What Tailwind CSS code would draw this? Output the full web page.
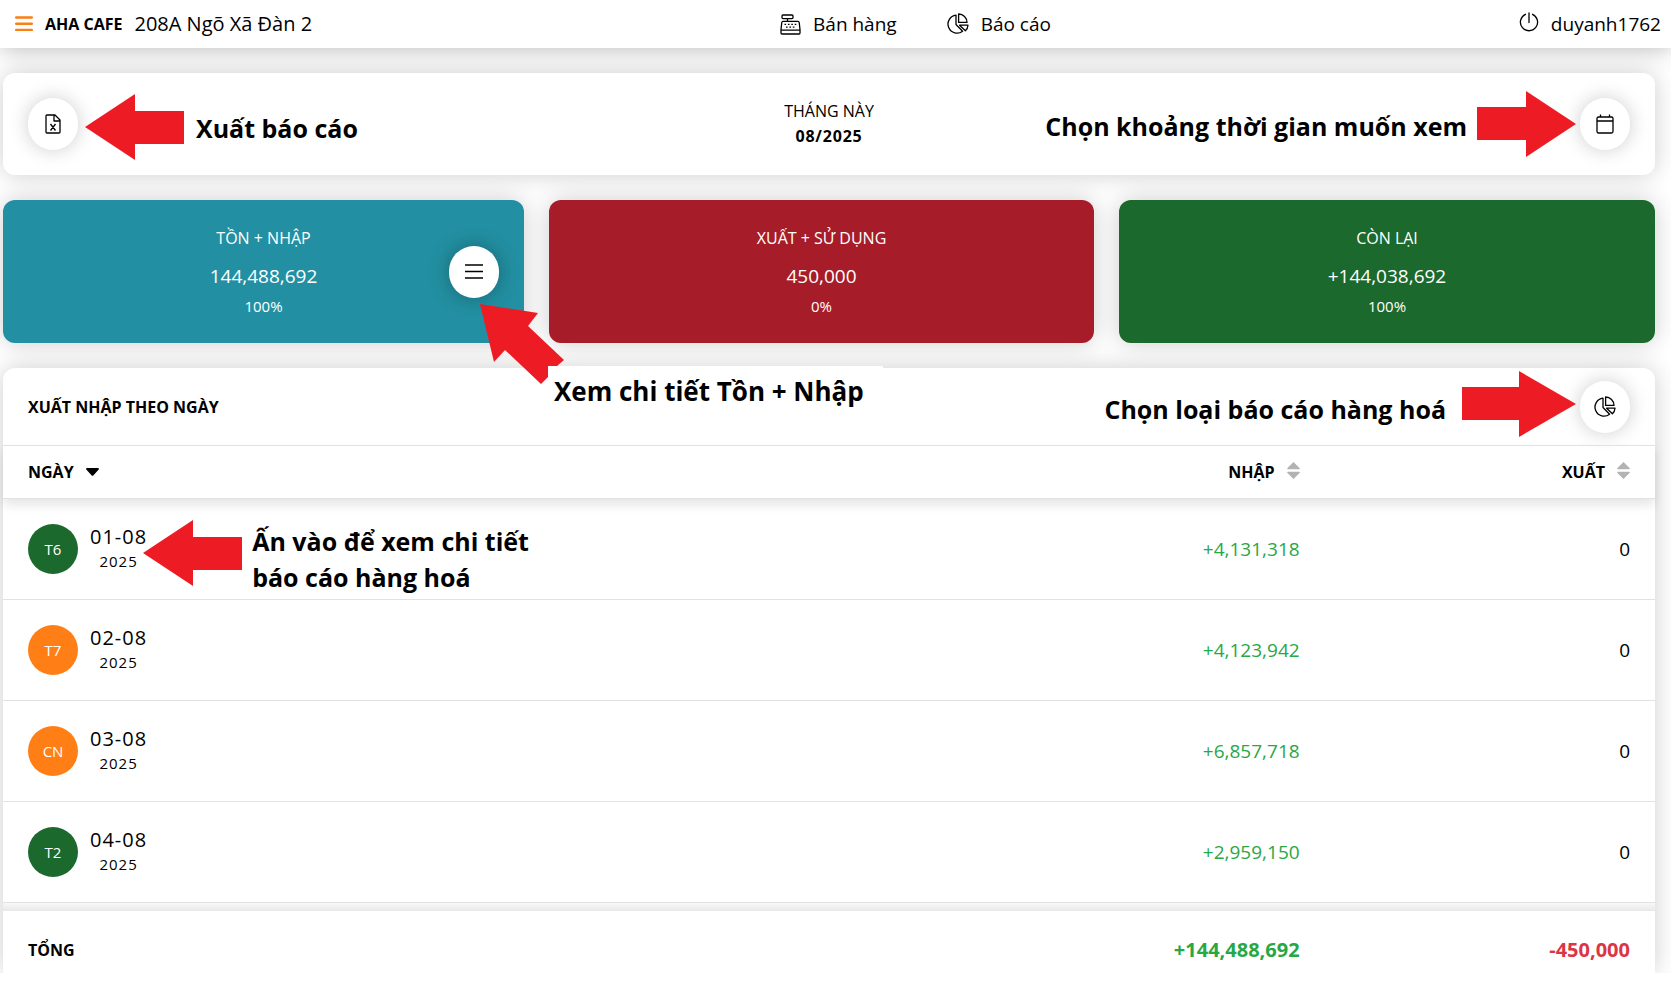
<!DOCTYPE html>
<html lang="vi">
<head>
<meta charset="utf-8">
<meta name="viewport" content="width=device-width, initial-scale=1">
<title>AHA CAFE - Báo cáo hàng hoá</title>
<script src="https://cdn.jsdelivr.net/npm/@tailwindcss/browser@4"></script>
</head>
<body class="min-h-screen overflow-x-hidden bg-white pb-[10px] font-['Open_Sans','Noto_Sans',sans-serif] text-[19px] leading-6 text-black">
<svg class="hidden">
  <symbol id="pie" viewBox="0 0 22 22" fill="none" stroke="currentColor" stroke-width="1.3" stroke-linejoin="round">
    <path d="M9 2.2A9 9 0 1 0 15.6 18.2L9 11.5Z"/>
    <path d="M11.6 1v8.4H20A8.4 8.4 0 0 0 11.6 1Z"/>
    <path d="M12.6 12.2H21a8.4 8.4 0 0 1-2.6 5.6Z"/>
  </symbol>
  <symbol id="arrow" viewBox="0 0 99 66"><path fill="#ed1c24" d="M0 33 50 0V17H99V50H50V66Z"/></symbol>
  <symbol id="sort" viewBox="0 0 13 17"><path fill="#b3b3b3" d="M6.500 0 12.800 6.200Q13 7.200 12 7.200H1Q0 7.200 .2 6.200ZM6.500 17 .2 10.800Q0 9.800 1 9.800H12Q13 9.800 12.800 10.800Z"/></symbol>
</svg>

<header class="relative z-10 flex h-12 items-center justify-between bg-white pr-[10px] pl-[15px] shadow-[0_0_25px_rgba(0,0,0,0.3)]">
  <div class="flex items-center">
    <button aria-label="Menu" class="text-[#fd7e14]"><svg class="h-4 w-[18px]" viewBox="0 0 18 16" stroke="currentColor" stroke-width="2.400" stroke-linecap="round"><path d="M1.200 1.500H16.800M1.200 7.700H16.800M1.200 13.900H16.800"/></svg></button>
    <strong class="ml-3 text-base">AHA CAFE</strong>
    <span class="ml-3 text-xl">208A Ngõ Xã Đàn 2</span>
  </div>
  <nav class="flex items-center gap-[50px]">
    <a href="#" class="flex items-center gap-3">
      <svg class="h-[21px] w-[21px]" viewBox="0 0 21 21" fill="none" stroke="currentColor" stroke-width="1.300" stroke-linejoin="round"><rect x="2" y="1" width="11" height="3.600" rx="1"/><path d="M7.500 4.600V7.300M3 7.300H18Q19 7.300 19.200 8.500L20 15.500V19Q20 20 19 20H2Q1 20 1 19V15.500L1.800 8.500Q2 7.300 3 7.300ZM1.200 16.200H19.800"/><path stroke-dasharray="1.600 1.800" d="M4.500 10.400H17M6 13.200H15.500"/></svg>
      Bán hàng</a>
    <a href="#" class="flex items-center gap-3"><svg class="h-[22px] w-[22px]"><use href="#pie"/></svg>Báo cáo</a>
  </nav>
  <a href="#" class="flex items-center gap-3">
    <svg class="mb-1 h-5 w-5" viewBox="0 0 20 20" fill="none" stroke="currentColor" stroke-width="1.300" stroke-linecap="round"><path d="M6.500 2.300A8.600 8.600 0 1 0 13.500 2.300M10 .8V10.500"/></svg>
    duyanh1762</a>
</header>

<main class="flex flex-col gap-[25px] overflow-hidden pt-[25px] pr-4 pl-[3px]">
  <section class="grid h-[102px] grid-cols-[1fr_auto_1fr] items-center rounded-xl bg-white px-[25px] shadow-[0_0_25px_rgba(0,0,0,0.2)]">
    <div class="flex items-center">
      <button aria-label="Xuất báo cáo" class="grid h-[52px] w-[50px] place-items-center rounded-full shadow-[0_0_20px_rgba(0,0,0,0.2)]">
        <svg class="h-5 w-4" viewBox="0 0 16 20" fill="none" stroke="currentColor" stroke-width="1.300" stroke-linejoin="round"><path d="M1 2Q1 1 2 1H10L15 6V18Q15 19 14 19H2Q1 19 1 18ZM9 1V7H15M5.500 10 10.500 16.500M10.500 10 5.500 16.500"/></svg>
      </button>
      <svg class="mt-[6px] ml-[7px] h-[66px] w-[99px]"><use href="#arrow"/></svg>
      <span class="mt-2 ml-3 text-[25px] leading-9 font-bold">Xuất báo cáo</span>
    </div>
    <div class="text-center text-base leading-[25px]">
      <div>THÁNG NÀY</div>
      <strong class="tracking-wider">08/2025</strong>
    </div>
    <div class="flex items-center justify-end">
      <span class="mt-1 mr-[10px] text-[25px] leading-9 font-bold whitespace-nowrap">Chọn khoảng thời gian muốn xem</span>
      <svg class="mr-1 h-[66px] w-[99px] rotate-180"><use href="#arrow"/></svg>
      <button aria-label="Chọn khoảng thời gian" class="grid h-[52px] w-[50px] place-items-center rounded-full shadow-[0_0_20px_rgba(0,0,0,0.2)]">
        <svg class="h-5 w-[18px]" viewBox="0 0 18 20" fill="none" stroke="currentColor" stroke-width="1.300"><rect x="1" y="3" width="16" height="16" rx="1.500"/><path d="M1 7H17M4.500 .5V3M13.500 .5V3"/></svg>
      </button>
    </div>
  </section>

  <section class="relative grid grid-cols-[521fr_545fr_536fr] gap-[25px] text-center text-white">
    <div class="relative h-[143px] rounded-xl bg-[#2290a2] pt-[26px] shadow-[0_0_25px_rgba(0,0,0,0.2)]">
      <div class="text-base">TỒN + NHẬP</div>
      <div class="mt-[14px]">144,488,692</div>
      <div class="mt-[6px] text-[15px]">100%</div>
      <button aria-label="Chi tiết Tồn + Nhập" class="absolute top-[46px] right-[25px] grid h-[52px] w-[50px] place-items-center rounded-full bg-white text-black shadow-[0_0_20px_rgba(0,0,0,0.3)]">
        <svg class="h-4 w-[18px]" viewBox="0 0 18 16" stroke="currentColor" stroke-width="1.400"><path d="M0 1H18M0 7.500H18M0 14H18"/></svg>
      </button>
    </div>
    <div class="h-[143px] rounded-xl bg-[#a61d29] pt-[26px] shadow-[0_0_25px_rgba(0,0,0,0.2)]">
      <div class="text-base">XUẤT + SỬ DỤNG</div>
      <div class="mt-[14px]">450,000</div>
      <div class="mt-[6px] text-[15px]">0%</div>
    </div>
    <div class="h-[143px] rounded-xl bg-[#1b692c] pt-[26px] shadow-[0_0_25px_rgba(0,0,0,0.2)]">
      <div class="text-base">CÒN LẠI</div>
      <div class="mt-[14px]">+144,038,692</div>
      <div class="mt-[6px] text-[15px]">100%</div>
    </div>
    <!-- Callout for the detail button -->
    <svg class="absolute top-[104px] left-[477px] z-20 h-20 w-[84px]" viewBox="0 0 84 80"><path fill="#ed1c24" d="M0 0 58 9 48 22 84 56 77 62H68V73L61 80 25 46 14 58Z"/></svg>
    <div class="absolute top-[166px] left-[545px] z-10 w-[335px] bg-white pl-[6px] text-left text-[26px] leading-[50px] font-bold whitespace-nowrap text-black">Xem chi tiết Tồn + Nhập</div>
  </section>

  <section class="rounded-t-xl bg-white shadow-[0_0_25px_rgba(0,0,0,0.2)]">
    <div class="flex h-[77px] items-center px-[25px]">
      <h1 class="text-base font-bold">XUẤT NHẬP THEO NGÀY</h1>
      <span class="mt-1 mr-4 ml-auto text-[25px] leading-9 font-bold">Chọn loại báo cáo hàng hoá</span>
      <svg class="mr-1 mb-[6px] h-[66px] w-[114px] rotate-180" viewBox="0 0 114 66"><path fill="#ed1c24" d="M0 33 57 0V17H114V50H57V66Z"/></svg>
      <button aria-label="Chọn loại báo cáo" class="grid h-[52px] w-[50px] place-items-center rounded-full shadow-[0_0_20px_rgba(0,0,0,0.2)]"><svg class="h-[22px] w-[22px]"><use href="#pie"/></svg></button>
    </div>
    <table class="w-full table-fixed border-separate border-spacing-0">
      <colgroup><col><col class="w-[20%]"><col class="w-[20%]"></colgroup>
      <thead class="relative shadow-[0_6px_10px_rgba(0,0,0,0.1)]">
        <tr class="h-[54px] text-base">
          <th class="border-y border-[#e2e2e2] px-[25px] text-left"><button class="flex items-center gap-3 font-bold">NGÀY <svg class="h-2 w-[13px]" viewBox="0 0 13 8"><path d="M1 0H12Q13.500 .5 12.500 1.800L7.500 7.300Q6.500 8.300 5.500 7.300L.5 1.800Q-.5 .5 1 0Z"/></svg></button></th>
          <th class="border-y border-[#e2e2e2] px-[25px]"><button class="ml-auto flex items-center gap-3 font-bold">NHẬP <svg class="mb-1 h-[17px] w-[13px]"><use href="#sort"/></svg></button></th>
          <th class="border-y border-[#e2e2e2] px-[25px]"><button class="ml-auto flex items-center gap-3 font-bold">XUẤT <svg class="mb-1 h-[17px] w-[13px]"><use href="#sort"/></svg></button></th>
        </tr>
      </thead>
      <tbody>
        <tr class="h-[101px]">
          <td class="border-b border-[#e2e2e2] px-[25px]"><div class="flex items-center">
            <span class="grid h-[50px] w-[50px] place-items-center rounded-full bg-[#1b692c] text-[15px] text-white">T6</span>
            <div class="ml-3 text-center text-xl leading-6 tracking-wider">01-08<div class="text-[15px]">2025</div></div>
            <svg class="-ml-1 mt-2 h-[66px] w-[99px]"><use href="#arrow"/></svg>
            <span class="mt-5 ml-[10px] text-[25px] leading-9 font-bold whitespace-nowrap">Ấn vào để xem chi tiết<br>báo cáo hàng hoá</span>
          </div></td>
          <td class="border-b border-[#e2e2e2] px-[25px] text-right text-[#28a745]">+4,131,318</td>
          <td class="border-b border-[#e2e2e2] px-[25px] text-right">0</td>
        </tr>
        <tr class="h-[101px]">
          <td class="border-b border-[#e2e2e2] px-[25px]"><div class="flex items-center">
            <span class="grid h-[50px] w-[50px] place-items-center rounded-full bg-[#ff7f16] text-[15px] text-white">T7</span>
            <div class="ml-3 text-center text-xl leading-6 tracking-wider">02-08<div class="text-[15px]">2025</div></div>
          </div></td>
          <td class="border-b border-[#e2e2e2] px-[25px] text-right text-[#28a745]">+4,123,942</td>
          <td class="border-b border-[#e2e2e2] px-[25px] text-right">0</td>
        </tr>
        <tr class="h-[101px]">
          <td class="border-b border-[#e2e2e2] px-[25px]"><div class="flex items-center">
            <span class="grid h-[50px] w-[50px] place-items-center rounded-full bg-[#ff7f16] text-[15px] text-white">CN</span>
            <div class="ml-3 text-center text-xl leading-6 tracking-wider">03-08<div class="text-[15px]">2025</div></div>
          </div></td>
          <td class="border-b border-[#e2e2e2] px-[25px] text-right text-[#28a745]">+6,857,718</td>
          <td class="border-b border-[#e2e2e2] px-[25px] text-right">0</td>
        </tr>
        <tr class="h-[101px]">
          <td class="border-b border-[#e2e2e2] px-[25px]"><div class="flex items-center">
            <span class="grid h-[50px] w-[50px] place-items-center rounded-full bg-[#1b692c] text-[15px] text-white">T2</span>
            <div class="ml-3 text-center text-xl leading-6 tracking-wider">04-08<div class="text-[15px]">2025</div></div>
          </div></td>
          <td class="border-b border-[#e2e2e2] px-[25px] text-right text-[#28a745]">+2,959,150</td>
          <td class="border-b border-[#e2e2e2] px-[25px] text-right">0</td>
        </tr>
      </tbody>
      <tfoot>
        <tr class="h-2"><td colspan="3" class="bg-linear-to-b from-[#f8f8f8] to-[#e8e8e8]"></td></tr>
        <tr class="h-[62px] text-xl font-bold">
          <td class="px-[25px] pt-4 text-base">TỔNG</td>
          <td class="px-[25px] pt-4 text-right text-[#28a745]">+144,488,692</td>
          <td class="px-[25px] pt-4 text-right text-[#dc3545]">-450,000</td>
        </tr>
      </tfoot>
    </table>
  </section>
</main>
</body>
</html>
